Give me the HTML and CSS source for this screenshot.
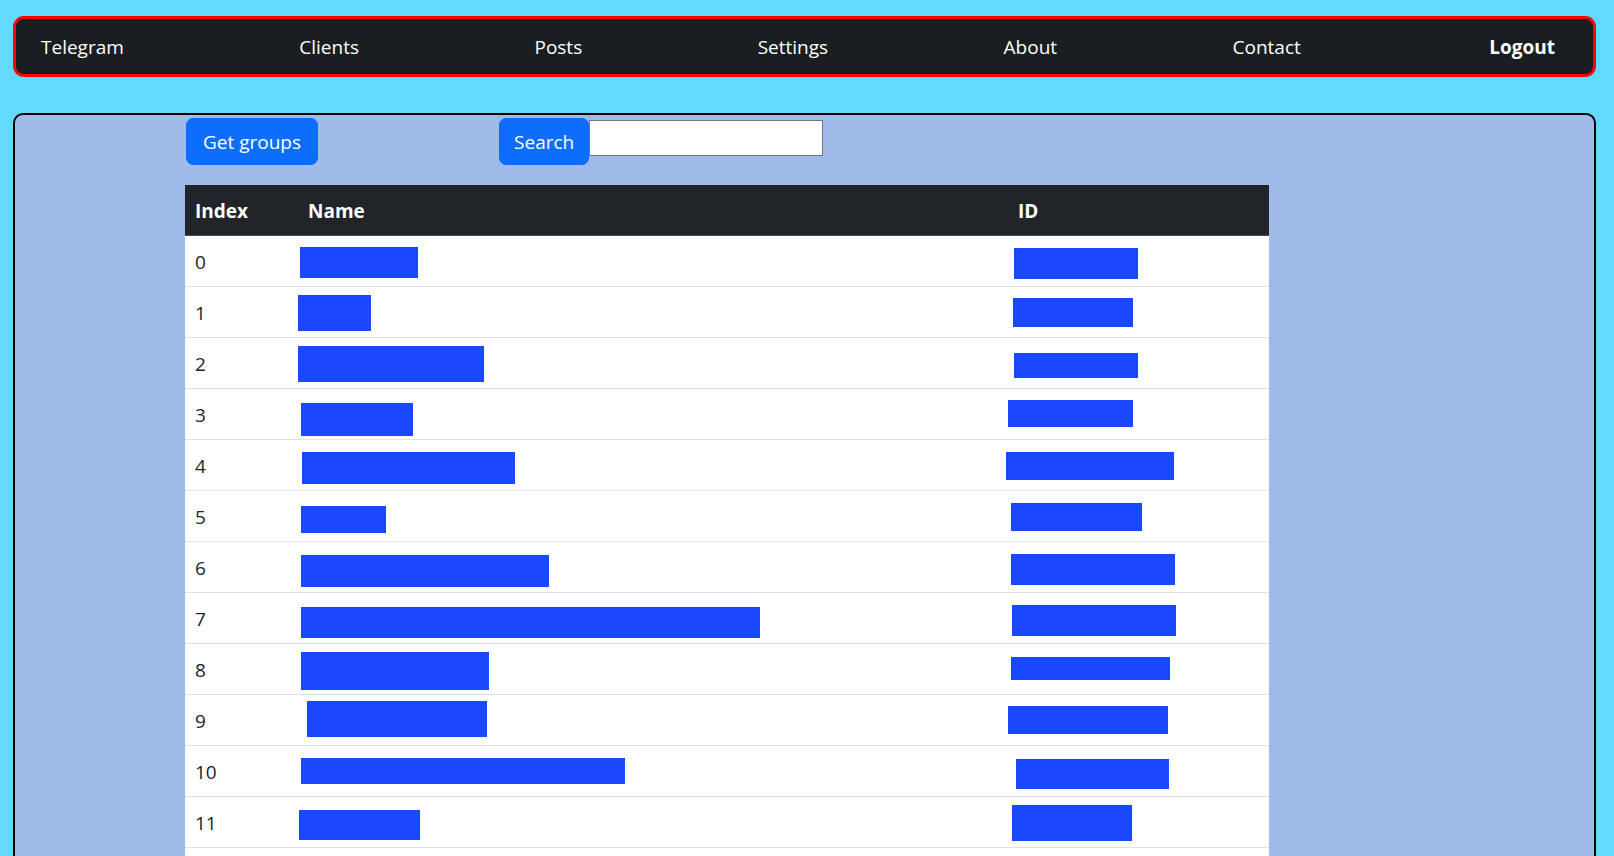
FILE: index.html
```html
<!DOCTYPE html>
<html lang="en">
<head>
<meta charset="utf-8">
<title>Telegram</title>
<link rel="stylesheet" href="styles.css">
</head>
<body>
<div class="page">
  <nav class="navbar">
    <a class="nav-link" href="#">Telegram</a>
    <a class="nav-link" href="#">Clients</a>
    <a class="nav-link" href="#">Posts</a>
    <a class="nav-link" href="#">Settings</a>
    <a class="nav-link" href="#">About</a>
    <a class="nav-link" href="#">Contact</a>
    <a class="nav-link logout" href="#">Logout</a>
  </nav>

  <main class="panel">
    <div class="controls">
      <button class="btn get-groups" type="button">Get groups</button>
      <div class="search-group">
        <button class="btn search-btn" type="button">Search</button>
        <input class="search-input" type="text">
      </div>
    </div>

    <table class="groups">
      <colgroup>
        <col class="c-index">
        <col class="c-name">
        <col class="c-id">
      </colgroup>
      <thead>
        <tr><th>Index</th><th>Name</th><th>ID</th></tr>
      </thead>
      <tbody>
        <tr><td>0</td><td class="red"><span class="mask" style="left:2px;top:11px;width:118px;height:31px"></span></td><td class="red"><span class="mask" style="left:6px;top:12px;width:124px;height:31px"></span></td></tr>
        <tr><td>1</td><td class="red"><span class="mask" style="left:0px;top:8px;width:73px;height:36px"></span></td><td class="red"><span class="mask" style="left:5px;top:11px;width:120px;height:29px"></span></td></tr>
        <tr><td>2</td><td class="red"><span class="mask" style="left:0px;top:8px;width:186px;height:36px"></span></td><td class="red"><span class="mask" style="left:6px;top:15px;width:124px;height:25px"></span></td></tr>
        <tr><td>3</td><td class="red"><span class="mask" style="left:3px;top:14px;width:112px;height:33px"></span></td><td class="red"><span class="mask" style="left:0px;top:11px;width:125px;height:27px"></span></td></tr>
        <tr><td>4</td><td class="red"><span class="mask" style="left:4px;top:12px;width:213px;height:32px"></span></td><td class="red"><span class="mask" style="left:-2px;top:12px;width:168px;height:28px"></span></td></tr>
        <tr><td>5</td><td class="red"><span class="mask" style="left:3px;top:15px;width:85px;height:27px"></span></td><td class="red"><span class="mask" style="left:3px;top:12px;width:131px;height:28px"></span></td></tr>
        <tr><td>6</td><td class="red"><span class="mask" style="left:3px;top:13px;width:248px;height:32px"></span></td><td class="red"><span class="mask" style="left:3px;top:12px;width:164px;height:31px"></span></td></tr>
        <tr><td>7</td><td class="red"><span class="mask" style="left:3px;top:14px;width:459px;height:31px"></span></td><td class="red"><span class="mask" style="left:4px;top:12px;width:164px;height:31px"></span></td></tr>
        <tr><td>8</td><td class="red"><span class="mask" style="left:3px;top:8px;width:188px;height:38px"></span></td><td class="red"><span class="mask" style="left:3px;top:13px;width:159px;height:23px"></span></td></tr>
        <tr><td>9</td><td class="red"><span class="mask" style="left:9px;top:6px;width:180px;height:36px"></span></td><td class="red"><span class="mask" style="left:0px;top:11px;width:160px;height:28px"></span></td></tr>
        <tr><td>10</td><td class="red"><span class="mask" style="left:3px;top:12px;width:324px;height:26px"></span></td><td class="red"><span class="mask" style="left:8px;top:13px;width:153px;height:30px"></span></td></tr>
        <tr><td>11</td><td class="red"><span class="mask" style="left:1px;top:13px;width:121px;height:30px"></span></td><td class="red"><span class="mask" style="left:4px;top:8px;width:120px;height:36px"></span></td></tr>
        <tr><td></td><td></td><td></td></tr>
      </tbody>
    </table>
  </main>
</div>
</body>
</html>
```

FILE: styles.css
```css
html {
  scrollbar-width: none;
}
html::-webkit-scrollbar {
  display: none;
}

body {
  margin: 0;
  background: #62dafd;
  font-family: "Open Sans", "Noto Sans", sans-serif;
  font-size: 19px;
  line-height: 30px;
  color: #212529;
}

.page {
  padding: 16px 18px 0 13px;
}

.navbar {
  display: flex;
  justify-content: space-between;
  align-items: center;
  background: #1b1e21;
  border: 3px solid #ff0000;
  border-radius: 11px;
  padding: 13px 38px 12px 25px;
}

.nav-link {
  color: #ffffff;
  text-decoration: none;
  font-size: 19px;
  line-height: 30px;
}

.logout {
  font-weight: 700;
  margin-left: 13px;
}

.panel {
  margin-top: 36px;
  background: #9fbce8;
  border: 2px solid #000000;
  border-radius: 10px;
  padding: 3px 0 0 171px;
  min-height: 900px;
}

.controls {
  display: flex;
  align-items: flex-start;
  gap: 181px;
}

.search-group {
  display: flex;
  align-items: flex-start;
}

.btn {
  font-family: "Open Sans", "Noto Sans", sans-serif;
  font-size: 19px;
  line-height: 30px;
  color: #ffffff;
  background: #0d6efd;
  border: 1px solid #0d6efd;
  border-radius: 7px;
  padding: 8px 16px 7px;
  cursor: pointer;
}

.search-btn {
  padding: 8px 14px 7px;
}

.search-input {
  margin-top: 2px;
  width: 234px;
  height: 36px;
  box-sizing: border-box;
  border: 1px solid #767676;
  background: #ffffff;
  padding: 0 4px;
  font-size: 16px;
}

.groups {
  margin-top: 20px;
  margin-left: -1px;
  width: 1084px;
  border-collapse: collapse;
  table-layout: fixed;
  background: #ffffff;
}

.c-index { width: 113px; }
.c-name { width: 710px; }
.c-id { width: 261px; }

.groups th {
  background: #212529;
  color: #ffffff;
  font-weight: 700;
  text-align: left;
  padding: 11px 10px 9px;
  height: 30px;
  border-bottom: 1px solid #4a4e52;
}

.groups td {
  padding: 11px 10px 9px;
  height: 30px;
  border-bottom: 1px solid #dee2e6;
  text-align: left;
  vertical-align: middle;
}

.groups td.red {
  position: relative;
}

.mask {
  position: absolute;
  background: #1a48ff;
}
```
